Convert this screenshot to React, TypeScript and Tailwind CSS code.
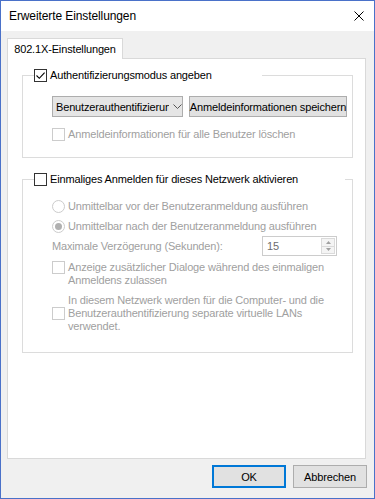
import React from "react";

function Check({ checked = false, disabled = false }: { checked?: boolean; disabled?: boolean }) {
  return (
    <span
      className={`flex h-[13px] w-[13px] shrink-0 items-center justify-center border bg-white ${
        disabled ? "border-[#cccccc]" : "border-[#333333]"
      }`}
    >
      {checked ? (
        <svg width="11" height="11" viewBox="0 0 11 11">
          <path d="M1.5 5.5 L4.3 8.3 L9.6 2.6" fill="none" stroke="#000" strokeWidth="1.1" />
        </svg>
      ) : null}
    </span>
  );
}

function Radio({ checked = false }: { checked?: boolean }) {
  return (
    <span className="flex h-[13px] w-[13px] shrink-0 items-center justify-center rounded-full border border-[#cccccc] bg-white">
      {checked ? <span className="h-[7px] w-[7px] rounded-full bg-[#b0b0b0]" /> : null}
    </span>
  );
}

export default function App() {
  return (
    <div className="flex h-[499px] w-[375px] flex-col border border-[#4a71c9] bg-[#f0f0f0] font-['Liberation_Sans',Arial,sans-serif] text-[11px] leading-[14px] tracking-[-0.15px] text-black">
      {/* title bar */}
      <div className="flex h-[30px] items-center justify-between bg-white pl-[8px] pr-[10px]">
        <span className="text-[12px] tracking-[-0.1px]">Erweiterte Einstellungen</span>
        <svg width="10" height="10" viewBox="0 0 10 10">
          <path d="M0.5 0.5 L9.5 9.5 M9.5 0.5 L0.5 9.5" stroke="#000" strokeWidth="1" />
        </svg>
      </div>

      {/* tabs */}
      <div className="mt-[7px] flex pl-[6px]">
        <div className="relative -mb-px flex h-[21px] w-[116px] items-center justify-center border border-b-0 border-[#d9d9d9] bg-white">
          802.1X-Einstellungen
        </div>
      </div>

      <div className="ml-[6px] h-[401px] w-[359px] border border-[#d9d9d9] bg-white pl-[14px] pt-[9px]">
        {/* group 1 */}
        <fieldset className="w-[331px] border border-[#dcdcdc] pb-[16px] pl-[11px] pr-[4px]">
          <legend className="flex items-center gap-[3px] whitespace-nowrap pr-[50px]">
            <Check checked />
            <span>Authentifizierungsmodus angeben</span>
          </legend>
          <div className="flex flex-col pl-[18px]">
            <div className="mt-[14px] flex gap-[6px]">
              <div className="flex h-[21px] w-[131px] items-center border border-[#adadad] bg-[#e5e5e5] pl-[3px]">
                <span className="w-[113px] overflow-hidden whitespace-nowrap">Benutzerauthentifizierung</span>
                <svg width="9" height="5" viewBox="0 0 9 5" className="ml-[4px]">
                  <path d="M0.5 0.5 L4.5 4.5 L8.5 0.5" fill="none" stroke="#555" strokeWidth="1" />
                </svg>
              </div>
              <div className="flex h-[21px] w-[158px] items-center justify-center whitespace-nowrap border border-[#adadad] bg-[#e1e1e1]">
                Anmeldeinformationen speichern
              </div>
            </div>
            <div className="mt-[10px] flex h-[14px] items-center gap-[3px] text-[#a0a0a0]">
              <Check disabled />
              <span>Anmeldeinformationen für alle Benutzer löschen</span>
            </div>
          </div>
        </fieldset>

        {/* group 2 */}
        <fieldset className="mt-[14px] w-[331px] border border-[#dcdcdc] pb-[19px] pl-[11px] pr-[4px]">
          <legend className="flex items-center gap-[3px] whitespace-nowrap pr-[47px]">
            <Check />
            <span>Einmaliges Anmelden für dieses Netzwerk aktivieren</span>
          </legend>
          <div className="flex flex-col pl-[18px] text-[#a0a0a0]">
            <div className="mt-[13px] flex h-[14px] items-center gap-[3px]">
              <Radio />
              <span>Unmittelbar vor der Benutzeranmeldung ausführen</span>
            </div>
            <div className="mt-[6px] flex h-[14px] items-center gap-[3px]">
              <Radio checked />
              <span>Unmittelbar nach der Benutzeranmeldung ausführen</span>
            </div>
            <div className="mt-[3px] flex h-[20px] items-center">
              <span className="w-[210px]">Maximale Verzögerung (Sekunden):</span>
              <div className="flex h-[20px] w-[75px] items-stretch border border-[#cccccc] bg-white">
                <span className="flex flex-1 items-center pl-[4px] text-[#6d6d6d]">15</span>
                <div className="my-[1px] mr-[1px] flex w-[14px] flex-col border border-[#dadada] bg-[#f4f4f4]">
                  <div className="flex flex-1 items-center justify-center">
                    <svg width="5" height="3" viewBox="0 0 5 3">
                      <path d="M0 3 L2.5 0 L5 3 Z" fill="#a0a0a0" />
                    </svg>
                  </div>
                  <div className="h-px bg-[#dadada]" />
                  <div className="flex flex-1 items-center justify-center">
                    <svg width="5" height="3" viewBox="0 0 5 3">
                      <path d="M0 0 L2.5 3 L5 0 Z" fill="#a0a0a0" />
                    </svg>
                  </div>
                </div>
              </div>
            </div>
            <div className="mt-[5px] flex gap-[3px] leading-[13px]">
              <Check disabled />
              <span>
                Anzeige zusätzlicher Dialoge während des einmaligen
                <br />
                Anmeldens zulassen
              </span>
            </div>
            <div className="mt-[7px] flex items-center gap-[3px] leading-[13px]">
              <Check disabled />
              <span>
                In diesem Netzwerk werden für die Computer- und die
                <br />
                Benutzerauthentifizierung separate virtuelle LANs
                <br />
                verwendet.
              </span>
            </div>
          </div>
        </fieldset>
      </div>

      {/* buttons */}
      <div className="mt-[6px] flex justify-end gap-[7px] pr-[7px]">
        <div className="flex h-[23px] w-[74px] items-center justify-center border-2 border-[#0078d7] bg-[#e1e1e1]">
          OK
        </div>
        <div className="flex h-[23px] w-[74px] items-center justify-center border border-[#adadad] bg-[#e1e1e1]">
          Abbrechen
        </div>
      </div>
    </div>
  );
}
